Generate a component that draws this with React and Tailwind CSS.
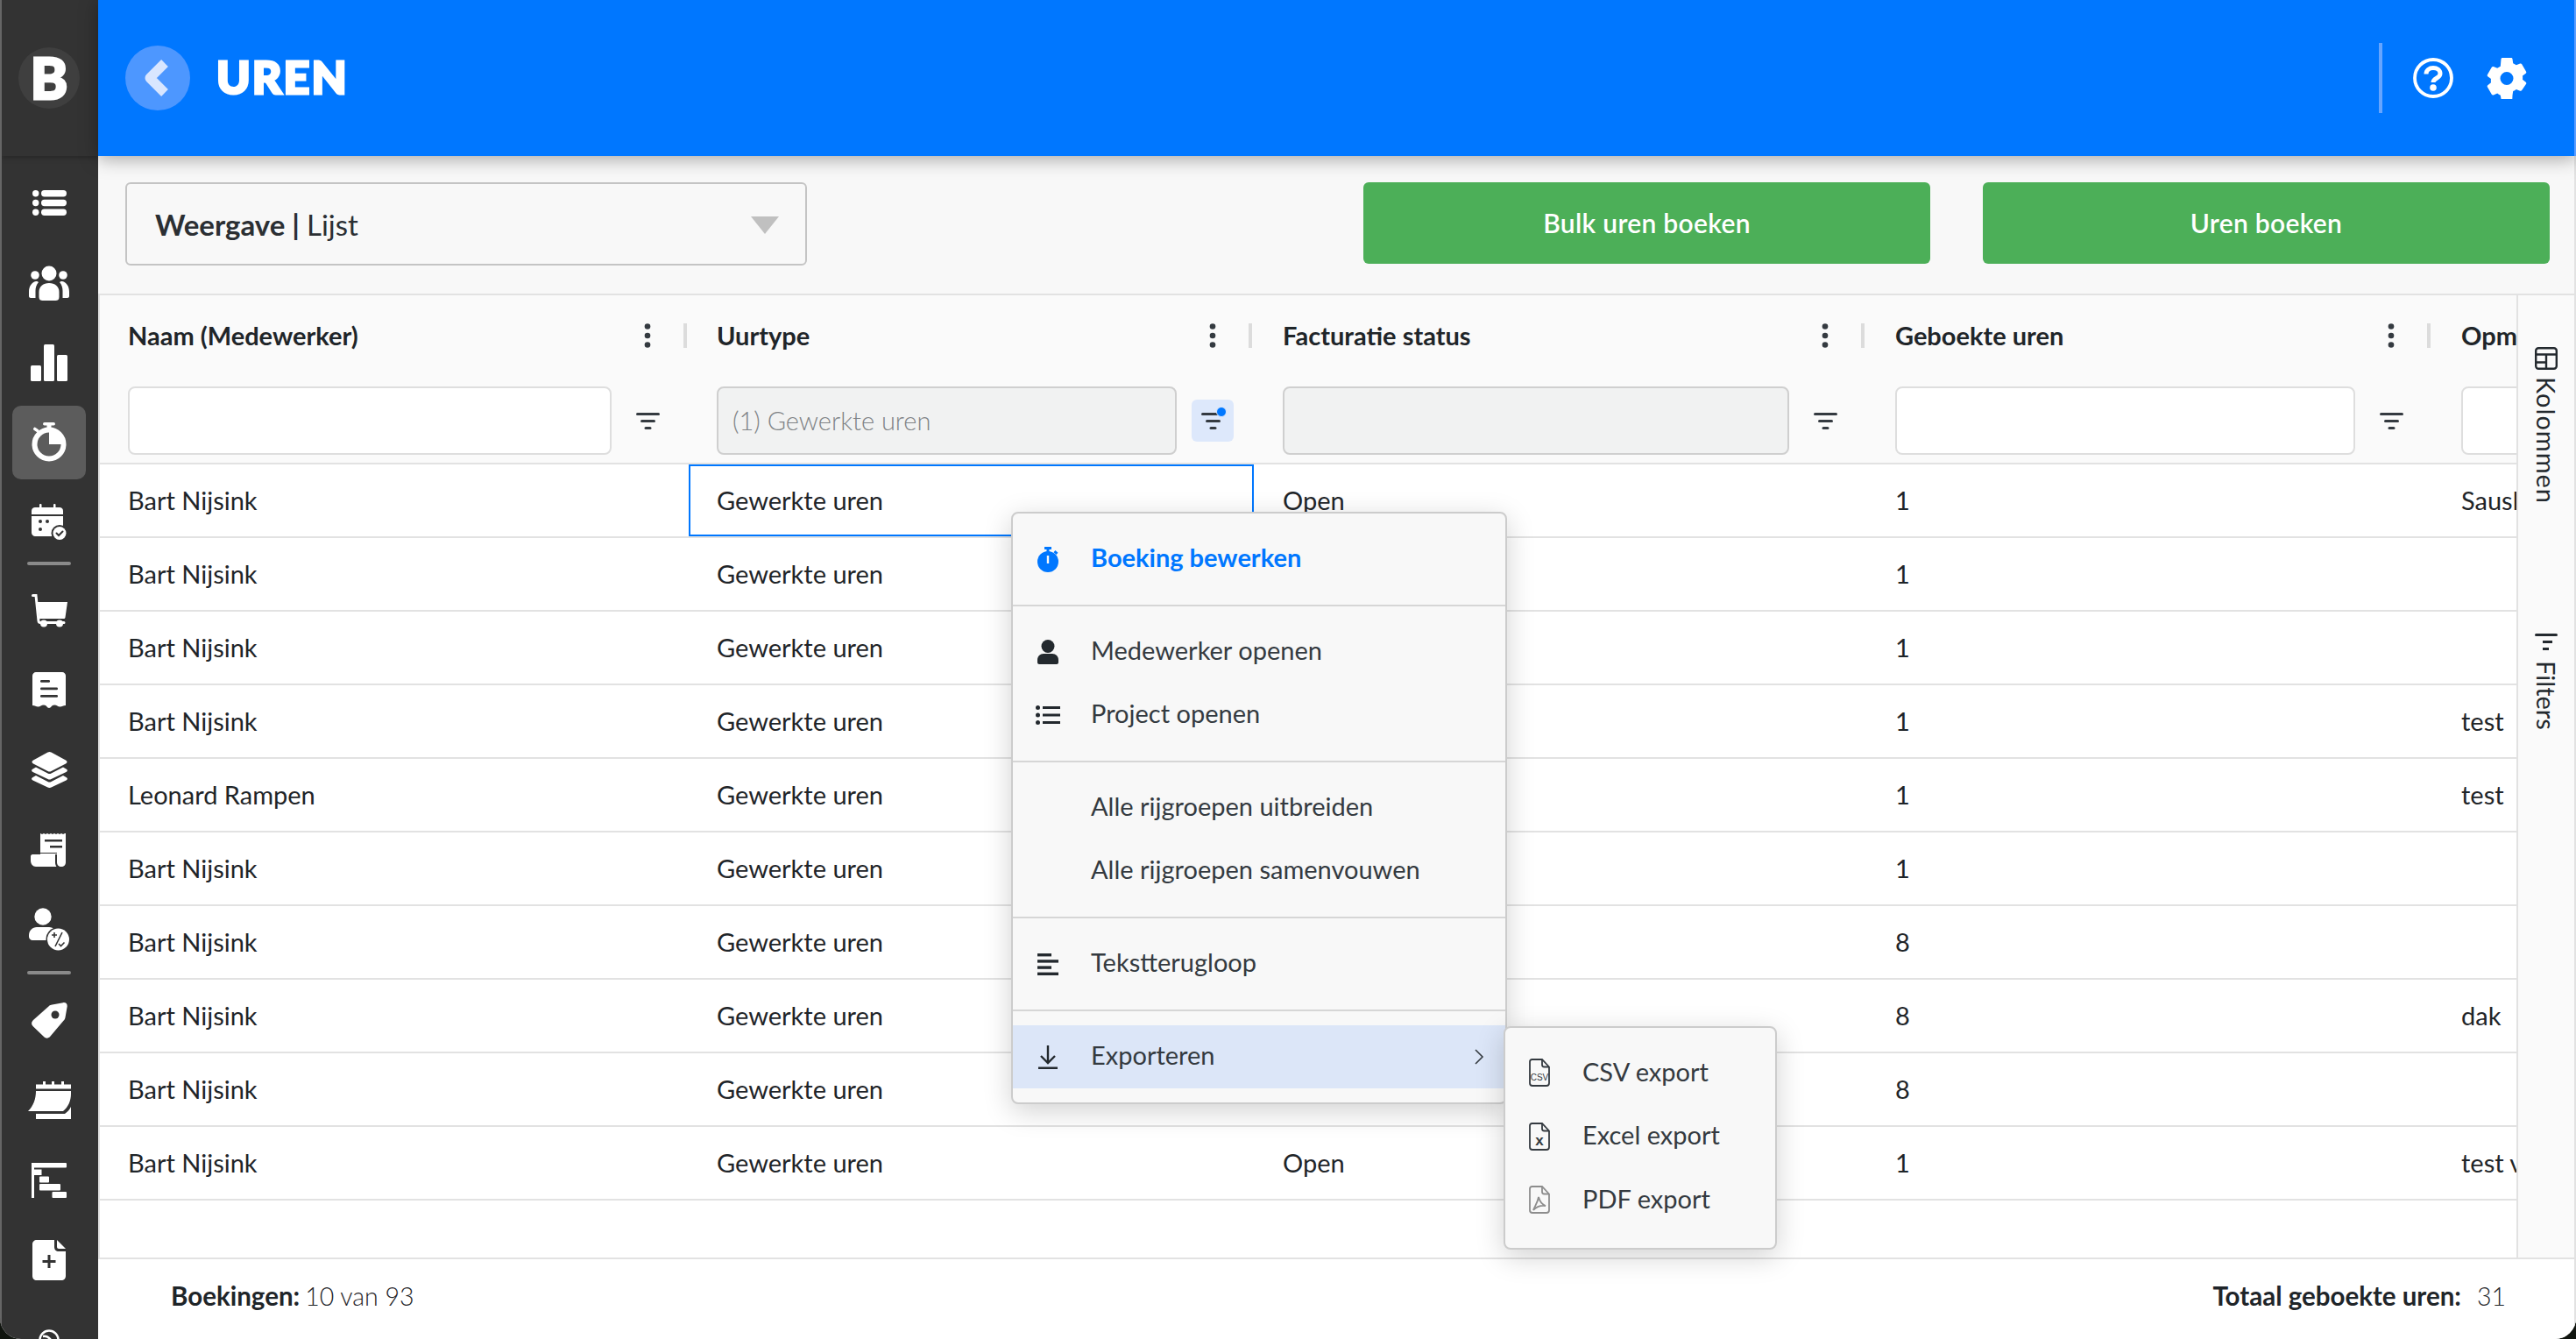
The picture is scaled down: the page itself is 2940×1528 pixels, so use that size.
import { Fragment } from "react";

const FONT = "font-['Lato','Noto_Sans',sans-serif]";

const rows = [
  ["Bart Nijsink", "Open", "1", "Sauskom"],
  ["Bart Nijsink", "", "1", ""],
  ["Bart Nijsink", "", "1", ""],
  ["Bart Nijsink", "", "1", "test"],
  ["Leonard Rampen", "", "1", "test"],
  ["Bart Nijsink", "", "1", ""],
  ["Bart Nijsink", "", "8", ""],
  ["Bart Nijsink", "", "8", "dak"],
  ["Bart Nijsink", "", "8", ""],
  ["Bart Nijsink", "Open", "1", "test voor"],
];

const GRID = "grid grid-cols-[672px_645px_699px_646px_400px] w-[3062px]";

function ListIcon() {
  return (
    <svg width="39" height="29" viewBox="0 0 39 29" fill="#fff">
      <circle cx="3.7" cy="3.7" r="3.7" />
      <circle cx="3.7" cy="14.5" r="3.7" />
      <circle cx="3.7" cy="25.3" r="3.7" />
      <rect x="10" width="29" height="7.4" rx="3.7" />
      <rect x="10" y="10.8" width="29" height="7.4" rx="3.7" />
      <rect x="10" y="21.6" width="29" height="7.4" rx="3.7" />
    </svg>
  );
}

function PeopleIcon() {
  return (
    <svg width="46" height="40" viewBox="0 0 46 40" fill="#fff">
      <circle cx="23" cy="9" r="8.5" />
      <circle cx="7" cy="11" r="4.8" />
      <circle cx="39" cy="11" r="4.8" />
      <path d="M11.5 36V30c0-6 5-10 11.5-10s11.500 4 11.500 10v6c0 3-2 4-4 4H15.500c-2 0-4-1-4-4z" />
      <path d="M0 30c0-6 3-11 8-12 1.500 0 2.500.5 3 1-2.500 3-3.500 6-3.500 10v8H2c-1 0-2-1-2-2z" />
      <path d="M46 30c0-6-3-11-8-12-1.500 0-2.500.5-3 1 2.500 3 3.500 6 3.500 10v8H44c1 0 2-1 2-2z" />
    </svg>
  );
}

function BarsIcon() {
  return (
    <svg width="42" height="42" viewBox="0 0 42 42" fill="#fff">
      <rect y="24" width="12" height="18" rx="1.500" />
      <rect x="15" width="12" height="42" rx="1.500" />
      <rect x="30" y="12" width="12" height="30" rx="1.500" />
    </svg>
  );
}

function TimerIcon() {
  return (
    <svg width="40" height="45" viewBox="0 0 40 45">
      <rect x="13" y="0" width="14" height="3.500" rx="1.700" fill="#fff" />
      <rect x="17.500" y="2" width="5" height="5" fill="#fff" />
      <rect x="2" y="6.500" width="7" height="3.500" rx="1.500" fill="#fff" transform="rotate(35 5 8)" />
      <circle cx="20" cy="25" r="16.500" fill="none" stroke="#fff" strokeWidth="6" />
      <path d="M20 25V7a18 18 0 0 1 18 18z" fill="#fff" />
    </svg>
  );
}

function CalendarCheckIcon() {
  return (
    <svg width="40" height="42" viewBox="0 0 40 42">
      <rect x="9" y="0" width="2.500" height="6" rx="1" fill="#fff" />
      <rect x="25" y="0" width="2.500" height="6" rx="1" fill="#fff" />
      <path d="M0 12V8c0-2.500 2-4 4-4h28c2 0 4 1.500 4 4v4z" fill="#fff" />
      <path d="M0 14h36v19c0 2-2 4-4 4H4c-2 0-4-2-4-4z" fill="#fff" />
      <circle cx="10" cy="20" r="2" fill="#333" />
      <circle cx="18" cy="20" r="2" fill="#333" />
      <circle cx="10" cy="29" r="2" fill="#333" />
      <circle cx="32" cy="33.500" r="9.500" fill="#333" />
      <circle cx="32" cy="33.500" r="7.500" fill="#fff" />
      <path d="M28.500 33.500l2.500 2.500 4.500-4.500" fill="none" stroke="#333" strokeWidth="2" strokeLinecap="round" />
    </svg>
  );
}

function CartIcon() {
  return (
    <svg width="41" height="38" viewBox="0 0 41 38">
      <path d="M1.500 1.500h3.500l3 29c.2 1.500 1 2 2 2h27" fill="none" stroke="#fff" strokeWidth="3" strokeLinecap="round" />
      <path d="M6.500 9H41l-2.500 17.500c-.2 1-1 1.500-2 1.500H9z" fill="#fff" />
      <circle cx="14" cy="33.500" r="4" fill="#fff" />
      <circle cx="32" cy="33.500" r="4" fill="#fff" />
    </svg>
  );
}

function ReceiptIcon() {
  return (
    <svg width="38" height="41" viewBox="0 0 38 41">
      <path d="M0 4c0-2 2-4 4-4h30c2 0 4 2 4 4v34c-3 0-4 1.500-6.500 1.500S28 37.500 25 37.500s-4 3.500-6 3.500-3-3.500-6-3.500-4 2-6.500 2S3 38 0 38z" fill="#fff" />
      <rect x="9" y="9" width="11" height="2.800" rx="1.200" fill="#333" />
      <rect x="9" y="17.500" width="20" height="2.800" rx="1.200" fill="#333" />
      <rect x="9" y="26" width="20" height="2.800" rx="1.200" fill="#333" />
    </svg>
  );
}

function LayersIcon() {
  return (
    <svg width="41" height="41" viewBox="0 0 41 41" fill="#fff">
      <path d="M18.500.6c1.300-.7 2.700-.7 4 0l16.500 8.800c2 1 2 3 0 4L22.500 22c-1.300.7-2.700.7-4 0L2 13.400c-2-1-2-3 0-4z" />
      <path d="M5 17.500l13.500 7c1.300.7 2.700.7 4 0l13.500-7 3.500 2c2 1 1.700 2.500 0 3.500L22.500 31c-1.300.7-2.700.7-4 0L1.500 23c-1.700-1-2-2.500 0-3.500z" />
      <path d="M5 27l13.500 7c1.300.7 2.700.7 4 0L36 27l3.500 2c2 1 1.700 2.500 0 3.500L22.500 40.500c-1.300.7-2.700.7-4 0l-17-8c-1.700-1-2-2.500 0-3.500z" />
    </svg>
  );
}

function BillIcon() {
  return (
    <svg width="42" height="39" viewBox="0 0 42 39">
      <path d="M11 1l2 1 2-1 2 1 2-1 2 1 2-1 2 1 2-1 2 1 2-1 2 1 2-1 2 1 2-1 1 0v33c0 3-2 5-5 5s-5-2-5-5v-9H11z" fill="#fff" />
      <path d="M2 25h26v9c0 2 .6 3.800 1.500 5H6c-3.500 0-6-3-6-7v-5c0-1 1-2 2-2z" fill="#fff" />
      <path d="M11 23.500h19" stroke="#333" strokeWidth="1" />
      <rect x="16" y="8" width="20" height="2.500" fill="#333" />
      <rect x="22" y="15" width="14" height="2.500" fill="#333" />
    </svg>
  );
}

function UserPercentIcon() {
  return (
    <svg width="46" height="49" viewBox="0 0 46 49">
      <circle cx="16" cy="10" r="9.700" fill="#fff" />
      <path d="M0 31c0-5 4-9 9-9h14c5 0 9 4 9 9v2c0 2-2 4-4 4H4c-2 0-4-2-4-4z" fill="#fff" />
      <circle cx="33.500" cy="36" r="14" fill="#333" />
      <circle cx="33.500" cy="36" r="12.500" fill="#fff" />
      <path d="M26 31h6M29 28v6M38 28l-8 16M34 41l2.500 2.500 4-4" fill="none" stroke="#333" strokeWidth="1.600" />
    </svg>
  );
}

function TagIcon() {
  return (
    <svg width="41" height="41" viewBox="0 0 41 41">
      <path d="M23.500 2.500L36 .2c3-.5 5 1.500 4.700 4.300L38.500 17c-.2 1.500-.8 2.700-2 3.800L21.500 38.500c-2 2.500-5 3-7.500.6L2 27.500c-2.500-2.500-2.500-5 0-7.500L20 4c1-1 2-1.300 3.500-1.500z" fill="#fff" />
      <circle cx="27" cy="14" r="4.500" fill="#333" />
    </svg>
  );
}

function CalendarNoteIcon() {
  return (
    <svg width="49" height="43" viewBox="0 0 49 43">
      <rect x="17" y="0" width="3" height="5" fill="#fff" />
      <rect x="27" y="0" width="3" height="5" fill="#fff" />
      <rect x="38" y="0" width="3" height="5" fill="#fff" />
      <path d="M9 3.500h40v5H9z" fill="#fff" />
      <path d="M9 11h40v3c0 8-3 15-9 20H0c6-6 9-14 9-23z" fill="#fff" />
      <path d="M9 37h33c3-2 5.500-5 7-8v14H9z" fill="#fff" />
    </svg>
  );
}

function GanttIcon() {
  return (
    <svg width="40" height="40" viewBox="0 0 40 40" fill="#fff">
      <rect width="3" height="40" />
      <rect width="40" height="5.500" rx="1" />
      <rect x="3" y="7.500" width="8.500" height="6.500" />
      <rect x="9" y="15.500" width="11" height="7" rx="1" />
      <rect x="9" y="24" width="24" height="7.500" rx="1" />
      <rect x="23.500" y="33" width="16.500" height="7" rx="1" />
    </svg>
  );
}

function FilePlusIcon() {
  return (
    <svg width="38" height="46" viewBox="0 0 38 46">
      <path d="M5 0h20v8c0 3 2 5 5 5h8v28c0 3-2 5-5 5H5c-3 0-5-2-5-5V5c0-3 2-5 5-5z" fill="#fff" />
      <path d="M28 0l10 10h-8c-1 0-2-1-2-2z" fill="#fff" />
      <path d="M19 17v15M11.500 24.500h15" stroke="#333" strokeWidth="3" />
    </svg>
  );
}

function LinkIcon() {
  return (
    <svg width="26" height="26" viewBox="0 0 26 26" fill="none" stroke="#fff" strokeWidth="2.500">
      <circle cx="13" cy="13" r="10.500" />
      <path d="M6 9c6-1 11 4 11 12M4 16c3-2 7 1 7 6" />
    </svg>
  );
}

function BackIcon() {
  return (
    <svg width="32" height="44" viewBox="0 0 32 44">
      <path d="M26 5L9 22l17 17" fill="none" stroke="#d9e6ff" strokeWidth="11" strokeLinejoin="round" />
    </svg>
  );
}

function HelpIcon() {
  return (
    <svg width="46" height="46" viewBox="0 0 46 46">
      <circle cx="23" cy="23" r="21" fill="none" stroke="#fff" strokeWidth="3.800" />
      <path d="M15 18.500c0-4.500 3.500-7 8-7s8 2.500 8 6.500c0 5.500-8 5-8 10" fill="none" stroke="#fff" strokeWidth="5" />
      <circle cx="23" cy="34" r="3.800" fill="#fff" />
    </svg>
  );
}

function GearIcon() {
  return (
    <svg width="46" height="47" viewBox="0 0 46 47">
      <path
        fill="#fff"
        fillRule="evenodd"
        d="M18 0h10c1 0 1.500.7 1.500 1.500l.7 4.700c1.300.6 2.500 1.300 3.600 2.100l4.400-1.800c.8-.3 1.600 0 2 .7l4.900 8.500c.4.700.2 1.500-.4 2l-3.700 2.900c.2 1.500.2 2.700 0 4.200l3.700 2.900c.6.500.8 1.300.4 2L40.200 37c-.4.700-1.200 1-2 .7l-4.400-1.800c-1.100.8-2.300 1.500-3.600 2.100l-.7 4.700-.2 4c0 .8-.7 1.300-1.500 1.300H18c-.8 0-1.500-.5-1.500-1.300l-.7-4c-1.300-.6-2.500-1.300-3.600-2.100l-4.400 1.800c-.8.300-1.600 0-2-.7L.9 33.200c-.4-.7-.2-1.500.4-2L5 28.300c-.2-1.500-.2-2.700 0-4.200l-3.700-2.900c-.6-.5-.8-1.300-.4-2L5.800 10.700c.4-.7 1.200-1 2-.7l4.400 1.800c1.100-.8 2.300-1.500 3.600-2.100l.7-8.200C16.500.7 17.200 0 18 0zM23 16a7.500 7.500 0 1 0 0 15 7.500 7.500 0 0 0 0-15z"
      />
    </svg>
  );
}

function Dots() {
  return (
    <svg width="8" height="28" viewBox="0 0 8 28" fill="#343a40">
      <circle cx="4" cy="3.500" r="3.300" />
      <circle cx="4" cy="14" r="3.300" />
      <circle cx="4" cy="24.500" r="3.300" />
    </svg>
  );
}

function FilterIcon() {
  return (
    <svg width="27" height="19" viewBox="0 0 27 19" fill="#343a40">
      <rect width="27" height="3" rx="1.500" />
      <rect x="5" y="8" width="17" height="3" rx="1.500" />
      <rect x="9.500" y="16" width="8" height="3" rx="1.500" />
    </svg>
  );
}

function StopwatchSmall() {
  return (
    <svg width="24" height="29" viewBox="0 0 24 29" fill="#0077ff">
      <rect x="8" width="8" height="3" />
      <rect x="10.500" y="2" width="3" height="4" />
      <rect x="19" y="5" width="4" height="3" transform="rotate(40 21 6.500)" />
      <circle cx="12" cy="17" r="12" />
      <rect x="10.800" y="10" width="2.400" height="9" fill="#f8f8f8" />
    </svg>
  );
}

function PersonSmall() {
  return (
    <svg width="24" height="28" viewBox="0 0 24 28" fill="#23292e">
      <circle cx="12" cy="7.500" r="7.500" />
      <path d="M0 23c0-4 3-7 7-7h10c4 0 7 3 7 7v3c0 1-1 2-2 2H2c-1 0-2-1-2-2z" />
    </svg>
  );
}

function ListSmall() {
  return (
    <svg width="28" height="22" viewBox="0 0 28 22" fill="#23292e">
      <circle cx="2.500" cy="2.500" r="2.500" />
      <circle cx="2.500" cy="11" r="2.500" />
      <circle cx="2.500" cy="19.500" r="2.500" />
      <rect x="8" y="1" width="20" height="3" />
      <rect x="8" y="9.500" width="20" height="3" />
      <rect x="8" y="18" width="20" height="3" />
    </svg>
  );
}

function WrapSmall() {
  return (
    <svg width="24" height="25" viewBox="0 0 24 25" fill="#23292e">
      <rect width="16" height="3.400" />
      <rect y="7.200" width="24" height="3.400" />
      <rect y="14.400" width="16" height="3.400" />
      <rect y="21.600" width="24" height="3.400" />
    </svg>
  );
}

function DownloadSmall() {
  return (
    <svg width="22" height="27" viewBox="0 0 22 27" fill="none" stroke="#23292e" strokeWidth="2.400">
      <path d="M11 0v20M3 12l8 8 8-8" />
      <path d="M0 25.800h22" strokeWidth="2.600" />
    </svg>
  );
}

function ChevronSmall() {
  return (
    <svg width="12" height="18" viewBox="0 0 12 18" fill="none" stroke="#343a40" strokeWidth="1.600">
      <path d="M2 1l8 8-8 8" />
    </svg>
  );
}

function FileSmall({ color = "#343a40", children }) {
  return (
    <svg width="24" height="32" viewBox="0 0 24 32" fill="none">
      <path d="M3.500 1H15l8 8.500V28c0 1.600-1.200 3-3 3H4c-1.700 0-3-1.400-3-3V3.500C1 2 2 1 3.500 1z" stroke={color} strokeWidth="1.800" />
      <path d="M15 1v6c0 1.500 1 2.500 2.500 2.500H23" stroke={color} strokeWidth="1.800" />
      {children}
    </svg>
  );
}

function SidebarItem({ children, active }) {
  return (
    <div className="h-[91px] flex items-center justify-center shrink-0">
      {active ? (
        <div className="w-[84px] h-[84px] rounded-[10px] bg-[#5c5c5c] flex items-center justify-center">{children}</div>
      ) : (
        children
      )}
    </div>
  );
}

function SidebarDivider({ tall }) {
  return (
    <div className={[tall ? "h-[13px] pt-0.5" : "h-[10px]", "shrink-0 flex items-start justify-center"].join(" ")}>
      <div className="w-[50px] h-1 rounded-sm bg-[#8a8a8a]" />
    </div>
  );
}

function Sidebar() {
  return (
    <div className="w-[112px] shrink-0 h-full bg-[#333333] border-l-2 border-[#666666] flex flex-col overflow-hidden">
      <div className="h-[178px] shrink-0 flex items-center justify-center pr-0.5 shadow-[0_2px_6px_rgba(0,0,0,0.25)]">
        <div className="w-[70px] h-[70px] rounded-full bg-[#3f3f3f] flex items-center justify-center text-white font-black text-[64px] leading-none [-webkit-text-stroke:3px_white]">
          B
        </div>
      </div>
      <div className="flex flex-col pt-[8px] pr-0.5">
        <SidebarItem><ListIcon /></SidebarItem>
        <SidebarItem><PeopleIcon /></SidebarItem>
        <SidebarItem><BarsIcon /></SidebarItem>
        <SidebarItem active><TimerIcon /></SidebarItem>
        <SidebarItem><CalendarCheckIcon /></SidebarItem>
        <SidebarDivider />
        <SidebarItem><CartIcon /></SidebarItem>
        <SidebarItem><ReceiptIcon /></SidebarItem>
        <SidebarItem><LayersIcon /></SidebarItem>
        <SidebarItem><BillIcon /></SidebarItem>
        <SidebarItem><UserPercentIcon /></SidebarItem>
        <SidebarDivider tall />
        <SidebarItem><TagIcon /></SidebarItem>
        <SidebarItem><CalendarNoteIcon /></SidebarItem>
        <SidebarItem><GanttIcon /></SidebarItem>
        <SidebarItem><FilePlusIcon /></SidebarItem>
        <SidebarItem><LinkIcon /></SidebarItem>
      </div>
    </div>
  );
}

function Header() {
  return (
    <div className="relative z-10 h-[178px] shrink-0 bg-[#0077ff] border-r-2 border-[#5b9dff] flex items-center pl-[31px] pr-[54px] shadow-[0_3px_20px_rgba(0,0,0,0.35)]">
      <div className="w-[74px] h-[74px] rounded-full bg-[#4d97ff] flex items-center justify-center pr-1">
        <BackIcon />
      </div>
      <div className="ml-[30px] mb-1 text-white font-black text-[52px] leading-none tracking-[2px] [-webkit-text-stroke:3px_white]">
        UREN
      </div>
      <div className="ml-auto w-1 h-[80px] bg-[#66a5ff]" />
      <div className="ml-[35px] flex items-center gap-[38px]">
        <HelpIcon />
        <GearIcon />
      </div>
    </div>
  );
}

function Toolbar() {
  return (
    <div className="h-[159px] shrink-0 bg-[#f8f8f8] border-b-2 border-r-2 border-[#e2e2e2] flex items-start pt-[30px] pl-[31px] pr-[28px]">
      <div className="w-[778px] h-[95px] border-2 border-[#c4c4c4] rounded-md flex items-center pl-[32px] pr-[30px] pt-0.5 text-[33px] text-[#2b2f33]">
        <span className="font-bold">Weergave</span>
        <span className="ml-2 font-bold">|</span>
        <span className="ml-2 font-normal">Lijst</span>
        <svg className="ml-auto" width="32" height="20" viewBox="0 0 32 20" fill="#c0c0c0">
          <path d="M0 0h32L16 20z" />
        </svg>
      </div>
      <button className="ml-auto w-[647px] h-[93px] rounded-md bg-[#4caf58] text-white text-[30px] font-semibold tracking-[0.3px]">
        Bulk uren boeken
      </button>
      <button className="ml-[60px] w-[647px] h-[93px] rounded-md bg-[#4caf58] text-white text-[30px] font-semibold tracking-[0.3px]">
        Uren boeken
      </button>
    </div>
  );
}

function HeadCell({ title, filter, disabled, active, pad = "pl-[33px]" }) {
  return (
    <div className={`${pad} h-full flex flex-col min-w-0`}>
      <div className="h-[92px] flex items-center shrink-0">
        <div className="flex-1 text-[29px] font-bold text-[#1f2529] whitespace-nowrap">{title}</div>
        <div className="w-12 flex justify-center"><Dots /></div>
        <div className="w-1 h-[28px] ml-[17px] mr-0.5 bg-[#dcdcdc]" />
      </div>
      <div className="mt-3 flex items-center pr-[23px]">
        <div
          className={[
            "flex-1 h-[78px] rounded-lg border-2 flex items-center pl-4 text-[29px] font-light",
            disabled ? "bg-[#f1f2f2] border-[#cfcfcf] text-[#7f8386]" : "bg-white border-[#dedede]",
          ].join(" ")}
        >
          {filter}
        </div>
        <div
          className={[
            "ml-[17px] w-12 h-12 rounded-md flex items-center justify-center relative",
            active ? "bg-[#dde8fb]" : "",
          ].join(" ")}
        >
          <FilterIcon />
          {active && <div className="absolute top-2 right-2 w-3 h-3 rounded-full bg-[#0077ff] border border-[#dde8fb]" />}
        </div>
      </div>
    </div>
  );
}

function Table() {
  return (
    <div className="flex-1 min-w-0 overflow-hidden">
      <div className={`${GRID} h-[193px] bg-[#fafafa] border-b-2 border-[#e2e2e2]`}>
        <HeadCell title="Naam (Medewerker)" pad="pl-[32px]" />
        <HeadCell title="Uurtype" filter="(1) Gewerkte uren" disabled active pad="pl-[32px]" />
        <HeadCell title="Facturatie status" disabled />
        <HeadCell title="Geboekte uren" />
        <HeadCell title="Opmerking" />
      </div>
      {rows.map((r, i) => (
        <div key={i} className={`${GRID} h-[84px] border-b-2 border-[#e2e2e2] text-[29px] font-normal text-[#1f2529]`}>
          <div className="pl-[32px] flex items-center">{r[0]}</div>
          <div className={i === 0 ? "pl-[30px] flex items-center border-2 border-[#0077ff]" : "pl-[32px] flex items-center"}>
            Gewerkte uren
          </div>
          <div className="pl-[33px] flex items-center">{r[1]}</div>
          <div className="pl-[33px] flex items-center">{r[2]}</div>
          <div className="pl-[33px] flex items-center whitespace-nowrap">{r[3]}</div>
        </div>
      ))}
    </div>
  );
}

function SidePanel() {
  return (
    <div className="w-[66px] shrink-0 bg-[#fafafa] border-l-2 border-[#e2e2e2] flex flex-col items-center pt-[59px] text-[29px] font-normal text-[#23292e]">
      <svg width="26" height="26" viewBox="0 0 26 26" fill="none" stroke="#23292e" strokeWidth="2.400">
        <rect x="1.200" y="1.200" width="23.600" height="23.600" rx="3" />
        <path d="M1.200 8.500h23.600M1.200 17.500h12M13 8.500v16.300" />
      </svg>
      <div className="[writing-mode:vertical-rl] mt-[8px] leading-none tracking-[1px]">Kolommen</div>
      <svg className="mt-[148px]" width="26" height="19" viewBox="0 0 26 19" fill="#23292e">
        <rect width="26" height="3" rx="1.500" />
        <rect x="9" y="8" width="11" height="3" />
        <rect x="9" y="16" width="7" height="3" />
      </svg>
      <div className="[writing-mode:vertical-rl] mt-[12px] leading-none">Filters</div>
    </div>
  );
}

function Footer() {
  return (
    <div className="h-[93px] shrink-0 bg-white border-t-2 border-r-2 border-[#e2e2e2] flex items-center pl-[83px] pr-[78px] pb-[6px] text-[29.500px] text-[#1f2529]">
      <span className="font-bold">Boekingen:</span>
      <span className="ml-1.5 text-[28.500px] font-light">10 van 93</span>
      <span className="ml-auto font-bold">Totaal geboekte uren:</span>
      <span className="ml-[18px] text-[28.500px] font-light">31</span>
    </div>
  );
}

function MenuItem({ icon, label, blue, highlight, chevron }) {
  return (
    <div className={["h-[72px] flex items-center", highlight ? "bg-[#dce6f8]" : ""].join(" ")}>
      <div className="w-[80px] flex justify-center shrink-0">{icon}</div>
      <div className={["ml-[9px] pb-1 text-[29px]", blue ? "text-[#0077ff] font-bold" : "font-normal text-[#343a40]"].join(" ")}>
        {label}
      </div>
      {chevron && <div className="ml-auto mr-6"><ChevronSmall /></div>}
    </div>
  );
}

function ContextMenu() {
  const box = "absolute rounded-lg border-2 border-[#cccccc] bg-[#f8f8f8] shadow-[0_8px_32px_rgba(0,0,0,0.18)]";
  return (
    <Fragment>
      <div className={`${box} left-[1154px] top-[584px] w-[566px] divide-y-2 divide-[#d6d6d6]`}>
        <div className="py-4">
          <MenuItem icon={<StopwatchSmall />} label="Boeking bewerken" blue />
        </div>
        <div className="py-4">
          <MenuItem icon={<PersonSmall />} label="Medewerker openen" />
          <MenuItem icon={<ListSmall />} label="Project openen" />
        </div>
        <div className="py-4">
          <MenuItem label="Alle rijgroepen uitbreiden" />
          <MenuItem label="Alle rijgroepen samenvouwen" />
        </div>
        <div className="py-4">
          <MenuItem icon={<WrapSmall />} label="Tekstterugloop" />
        </div>
        <div className="py-4">
          <MenuItem icon={<DownloadSmall />} label="Exporteren" highlight chevron />
        </div>
      </div>
      <div className={`${box} left-[1716px] top-[1171px] w-[312px] pt-[15px] pb-[18px]`}>
        {[
          [
            "CSV export",
            <FileSmall>
              <text x="12" y="25" textAnchor="middle" fontSize="10" fontFamily="Liberation Sans" fill="#343a40">CSV</text>
            </FileSmall>,
          ],
          [
            "Excel export",
            <FileSmall>
              <text x="12" y="26" textAnchor="middle" fontSize="17" fontWeight="700" fontFamily="Liberation Sans" fill="#343a40">x</text>
            </FileSmall>,
          ],
          [
            "PDF export",
            <FileSmall color="#8d8d8d">
              <path d="M11 13c1 4 3 8 8 10-4-.5-10 .5-14 5 2-5 5-9 6-15z" fill="none" stroke="#8d8d8d" strokeWidth="1.800" />
            </FileSmall>,
          ],
        ].map(([label, icon]) => (
          <div key={label} className="h-[72.5px] flex items-center pl-[27px]">
            {icon}
            <div className="ml-[37px] pb-1 text-[29px] font-normal text-[#343a40]">{label}</div>
          </div>
        ))}
      </div>
    </Fragment>
  );
}

export default function App() {
  return (
    <div className="w-[2940px] h-[1528px] bg-[#10150f]">
      <div className={`relative w-full h-full rounded-b-[24px] overflow-hidden bg-white flex ${FONT}`}>
        <Sidebar />
        <div className="flex-1 min-w-0 flex flex-col h-full">
          <Header />
          <Toolbar />
          <div className="flex-1 min-h-0 flex border-l-2 border-r-2 border-[#e2e2e2]">
            <Table />
            <SidePanel />
          </div>
          <Footer />
        </div>
        <ContextMenu />
      </div>
    </div>
  );
}
